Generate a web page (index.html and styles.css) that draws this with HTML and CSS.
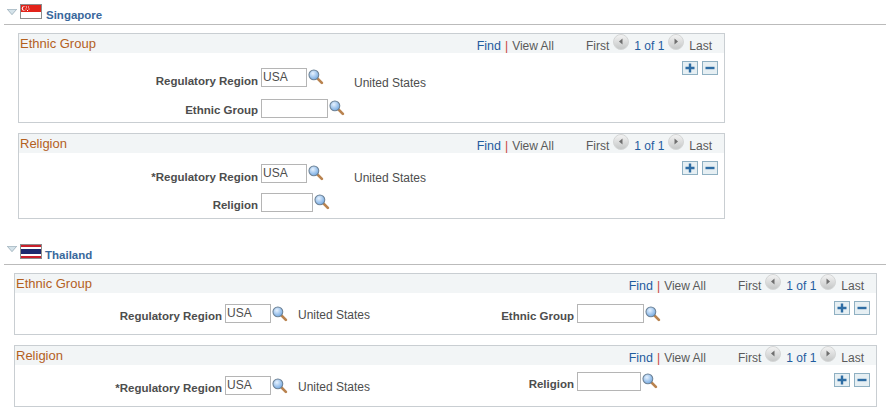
FILE: index.html
```html
<!DOCTYPE html>
<html lang="en">
<head>
<meta charset="utf-8">
<title>Regional</title>
<link rel="stylesheet" href="styles.css">
</head>
<body>
<svg class="defs" width="0" height="0" aria-hidden="true">
  <defs>
    <radialGradient id="lens" cx="0.4" cy="0.35" r="0.7"><stop offset="0" stop-color="#e6f2ff"/><stop offset="1" stop-color="#6fa6e0"/></radialGradient>
    <linearGradient id="nav" x1="0" y1="0" x2="0" y2="1"><stop offset="0" stop-color="#f4f4f4"/><stop offset="1" stop-color="#c4c6c6"/></linearGradient>
    <symbol id="lookup" viewBox="0 0 15 15">
      <path d="M8.8 8.8L13 13" stroke="#b9834f" stroke-width="2.6" stroke-linecap="round"/>
      <circle cx="5.5" cy="5.5" r="4.6" fill="url(#lens)" stroke="#6d8296" stroke-width="1"/>
    </symbol>
    <symbol id="prev" viewBox="0 0 16 16">
      <circle cx="8" cy="8" r="7.5" fill="url(#nav)" stroke="#d4d6d6"/>
      <path d="M9.5 4.5V10.5L6 7.5Z" fill="#6e6e6e"/>
    </symbol>
    <symbol id="next" viewBox="0 0 16 16">
      <circle cx="8" cy="8" r="7.5" fill="url(#nav)" stroke="#d4d6d6"/>
      <path d="M6.5 4.5V10.5L10 7.5Z" fill="#6e6e6e"/>
    </symbol>
    <symbol id="plus" viewBox="0 0 16 14">
      <rect x="0.5" y="0.5" width="15" height="13" fill="#e6eff3" stroke="#8fb0c2"/>
      <path d="M8 2.5V11.5M3.5 7H12.5" stroke="#2e6da4" stroke-width="2.4"/>
    </symbol>
    <symbol id="minus" viewBox="0 0 16 14">
      <rect x="0.5" y="0.5" width="15" height="13" fill="#e6eff3" stroke="#8fb0c2"/>
      <path d="M3.5 7H12.5" stroke="#2e6da4" stroke-width="2.4"/>
    </symbol>
    <symbol id="tri" viewBox="0 0 10 6">
      <path d="M0.3 0.3H9.7L5 5.7Z" fill="#d5e3ea" stroke="#8fa4b0" stroke-width="0.7"/>
    </symbol>
  </defs>
</svg>

<section class="section sg">
  <header class="section-head">
    <svg class="tri"><use href="#tri"/></svg>
    <svg class="flag" viewBox="0 0 22 15">
      <rect x="0.5" y="0.5" width="21" height="14" fill="#fff" stroke="#8c8c8c"/>
      <rect x="1" y="1" width="20" height="7" fill="#e2231a"/>
      <circle cx="4" cy="4.5" r="2.2" fill="#fff"/><circle cx="5" cy="4.5" r="2.1" fill="#e2231a"/>
      <path d="M6 3h1M8 3h1M5.5 5h1M8.5 5h1M7 6.5h1" stroke="#fff" stroke-width="1"/>
    </svg>
    <h2 class="section-title">Singapore</h2>
  </header>

  <div class="grid grid-narrow eth-sg">
    <div class="grid-head">
      <span class="grid-title">Ethnic Group</span>
      <nav class="grid-nav"><a class="link find">Find</a><span class="sep">|</span><span class="view">View All</span><span class="first">First</span><svg class="nav-ic"><use href="#prev"/></svg><a class="link count">1 of 1</a><svg class="nav-ic"><use href="#next"/></svg><span class="last">Last</span></nav>
    </div>
    <div class="grid-body stack">
      <div class="fields">
        <div class="row">
          <label class="lbl lbl-sg">Regulatory Region</label><span class="input in-usa">USA</span><svg class="look"><use href="#lookup"/></svg><span class="desc desc-sg">United States</span>
        </div>
        <div class="row row2">
          <label class="lbl lbl-sg">Ethnic Group</label><span class="input in-eth"></span><svg class="look"><use href="#lookup"/></svg>
        </div>
      </div>
      <div class="btns"><svg class="btn"><use href="#plus"/></svg><svg class="btn"><use href="#minus"/></svg></div>
    </div>
  </div>

  <div class="grid grid-narrow rel-sg">
    <div class="grid-head">
      <span class="grid-title">Religion</span>
      <nav class="grid-nav"><a class="link find">Find</a><span class="sep">|</span><span class="view">View All</span><span class="first">First</span><svg class="nav-ic"><use href="#prev"/></svg><a class="link count">1 of 1</a><svg class="nav-ic"><use href="#next"/></svg><span class="last">Last</span></nav>
    </div>
    <div class="grid-body stack">
      <div class="fields">
        <div class="row">
          <label class="lbl lbl-sg">*Regulatory Region</label><span class="input in-usa">USA</span><svg class="look"><use href="#lookup"/></svg><span class="desc desc-sg">United States</span>
        </div>
        <div class="row row2">
          <label class="lbl lbl-sg">Religion</label><span class="input in-rel"></span><svg class="look"><use href="#lookup"/></svg>
        </div>
      </div>
      <div class="btns"><svg class="btn"><use href="#plus"/></svg><svg class="btn"><use href="#minus"/></svg></div>
    </div>
  </div>
</section>

<section class="section th">
  <header class="section-head">
    <svg class="tri"><use href="#tri"/></svg>
    <svg class="flag" viewBox="0 0 22 15">
      <rect x="0.5" y="0.5" width="21" height="14" fill="#fff" stroke="#8c8c8c"/>
      <rect x="1" y="1" width="20" height="2" fill="#c8202c"/>
      <rect x="1" y="5" width="20" height="5" fill="#1c2a6e"/>
      <rect x="1" y="12" width="20" height="2" fill="#c8202c"/>
    </svg>
    <h2 class="section-title">Thailand</h2>
  </header>

  <div class="grid grid-wide">
    <div class="grid-head">
      <span class="grid-title">Ethnic Group</span>
      <nav class="grid-nav"><a class="link find">Find</a><span class="sep">|</span><span class="view">View All</span><span class="first">First</span><svg class="nav-ic"><use href="#prev"/></svg><a class="link count">1 of 1</a><svg class="nav-ic"><use href="#next"/></svg><span class="last">Last</span></nav>
    </div>
    <div class="grid-body inline">
      <div class="row">
        <label class="lbl lbl-th">Regulatory Region</label><span class="input in-usa">USA</span><svg class="look"><use href="#lookup"/></svg><span class="desc desc-th">United States</span>
        <label class="lbl lbl-th2">Ethnic Group</label><span class="input in-eth"></span><svg class="look"><use href="#lookup"/></svg>
      </div>
      <div class="btns"><svg class="btn"><use href="#plus"/></svg><svg class="btn"><use href="#minus"/></svg></div>
    </div>
  </div>

  <div class="grid grid-wide">
    <div class="grid-head">
      <span class="grid-title">Religion</span>
      <nav class="grid-nav"><a class="link find">Find</a><span class="sep">|</span><span class="view">View All</span><span class="first">First</span><svg class="nav-ic"><use href="#prev"/></svg><a class="link count">1 of 1</a><svg class="nav-ic"><use href="#next"/></svg><span class="last">Last</span></nav>
    </div>
    <div class="grid-body inline">
      <div class="row">
        <label class="lbl lbl-th">*Regulatory Region</label><span class="input in-usa">USA</span><svg class="look"><use href="#lookup"/></svg><span class="desc desc-th">United States</span>
        <label class="lbl lbl-th2 raised">Religion</label><span class="input in-rel2 raised"></span><svg class="look raised"><use href="#lookup"/></svg>
      </div>
      <div class="btns"><svg class="btn"><use href="#plus"/></svg><svg class="btn"><use href="#minus"/></svg></div>
    </div>
  </div>
</section>
</body>
</html>
```

FILE: styles.css
```css
html, body { margin: 0; padding: 0; background: #fff; }
body { width: 891px; height: 416px; overflow: hidden; font: 12px/14px "Liberation Sans", Arial, sans-serif; color: #4d4d4d; }
.defs { display: block; height: 0; }

.section { display: flow-root; }
.section-head { display: flex; align-items: flex-start; margin-left: 4px; width: 882px; box-sizing: border-box; border-bottom: 1px solid #bbb; }
.sg .section-head { height: 25px; padding-top: 4px; }
.th .section-head { height: 24px; padding-top: 3px; }
.th { margin-top: 22px; }
.tri { width: 10px; height: 6px; margin: 5px 3px 0 3px; flex: none; }
.flag { width: 22px; height: 15px; flex: none; margin-right: 4px; }
.th .flag { margin-right: 3px; }
.th .tri { margin-top: 2px; }
.section-title { margin: 4px 0 0; font-size: 11.5px; line-height: 14px; font-weight: bold; color: #39689c; }

.grid { box-sizing: border-box; border: 1px solid #c9ced2; }
.grid-narrow { width: 707px; margin-left: 18px; }
.eth-sg { height: 90px; margin-top: 8px; }
.rel-sg { height: 86px; margin-top: 10px; }
.grid-wide { width: 863px; height: 62px; margin-left: 14px; }
.section-head + .grid-wide { margin-top: 8px; }
.grid-wide + .grid-wide { margin-top: 10px; }

.grid-head { display: flex; align-items: center; height: 19px; background: #f2f5f6; padding-left: 1px; padding-right: 12px; }
.grid-title { font-size: 13px; color: #b4601e; line-height: 19px; }
.grid-nav { margin-left: auto; align-self: flex-start; display: flex; align-items: flex-start; color: #5a5a5a; }
.grid-nav > * { flex: none; }
.grid-nav > a, .grid-nav > span { padding-top: 5px; }
.link { color: #1f5c9e; }
.find { font-size: 12.5px; }
.sep { color: #c8413b; margin: 0 4px; }
.first { margin-left: 32px; }
.count { margin: 0 4px 0 5px; }
.nav-ic { width: 16px; height: 16px; margin-left: 4px; }
.count + .nav-ic { margin-left: 0; }
.last { margin-left: 5px; }

.grid-body { display: flex; justify-content: space-between; align-items: flex-start; }
.eth-sg .fields { padding-top: 15px; }
.rel-sg .fields { padding-top: 11px; }
.inline { padding-top: 8px; }
.inline .row { padding-top: 3px; }
.btns { display: flex; gap: 4px; padding-top: 8px; padding-right: 6px; }
.inline .btns { padding-top: 0; }
.btn { width: 16px; height: 14px; display: block; }

.row { display: flex; align-items: flex-start; }
.eth-sg .row2 { margin-top: 9px; }
.rel-sg .row2 { margin-top: 8px; }
.lbl { font-size: 11.5px; font-weight: bold; text-align: right; flex: none; padding-top: 6px; margin-right: 3px; color: #4d4d4d; }
.inline .lbl { padding-top: 5px; }
.eth-sg .row2 .lbl { padding-top: 4px; }
.rel-sg .row2 .lbl { padding-top: 5px; }
.lbl-sg { width: 239px; }
.lbl-th { width: 207px; }
.lbl-th2 { width: 120px; margin-left: 84px; }
.input { box-sizing: border-box; height: 19px; border: 1px solid #b5b5b5; background: #fff; flex: none; padding: 0 1px; line-height: 17px; color: #4d4d4d; }
.in-usa { width: 46px; }
.in-eth { width: 67px; }
.in-rel { width: 52px; }
.in-rel2 { width: 64px; }
.look { width: 16px; height: 16px; flex: none; margin: 1px 0 0 1px; }
.inline .look { margin-top: 2px; }
.desc { flex: none; }
.eth-sg .desc-sg { padding-top: 8px; }
.desc-sg { margin-left: 30px; padding-top: 7px; }
.desc-th { margin-left: 10px; padding-top: 4px; }
.raised { margin-top: -4px; }
.inline .look.raised { margin-top: -3px; }
```
